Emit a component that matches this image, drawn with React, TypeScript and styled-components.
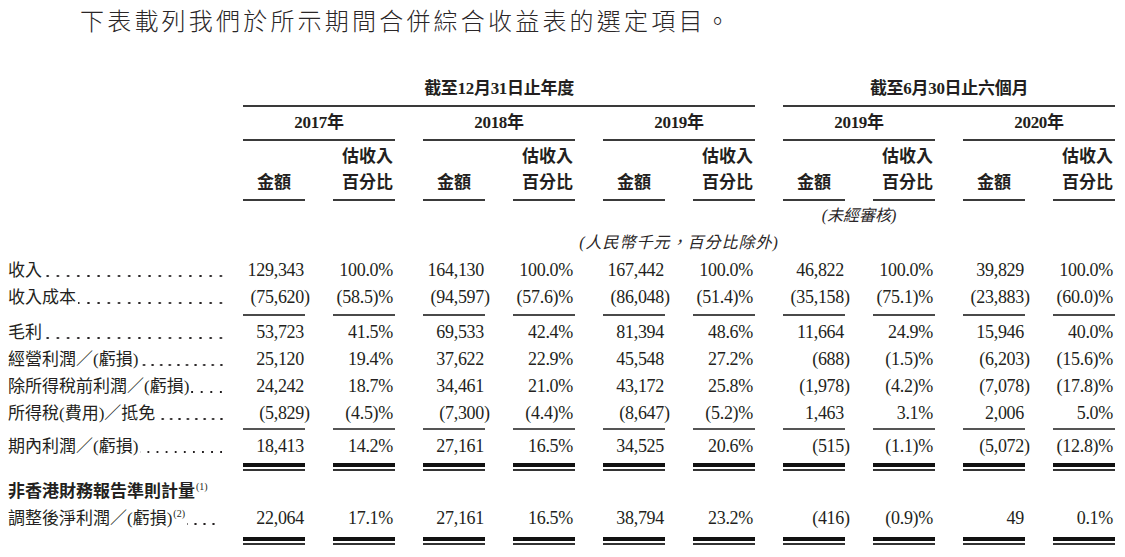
import React from "react";
import styled, { createGlobalStyle } from "styled-components";

const GlobalStyle = createGlobalStyle`
  body {
    margin: 0;
    background: #ffffff;
    color: #231f20;
    font-family: "Liberation Serif", "Noto Sans CJK TC", serif;
  }
`;

type Rule = "single" | "thin" | "double";

const Page = styled.div`
  width: 1125px;
  height: 557px;
  overflow: hidden;
`;

const Title = styled.div`
  padding: 4px 0 0 80px;
  font-family: "Noto Sans CJK TC", sans-serif;
  font-weight: 300;
  font-size: 24px;
  line-height: 32px;
  letter-spacing: 3.2px;
  color: #2a2627;
`;

const Table = styled.div`
  padding-left: 8px;
`;

const Row = styled.div<{ $mt?: number }>`
  display: grid;
  grid-template-columns: 207px repeat(10, 62px);
  column-gap: 28px;
  align-items: start;
  margin-top: ${(p) => p.$mt ?? 0}px;
`;

const GroupHead = styled.div<{ $span: number }>`
  grid-column: span ${(p) => p.$span};
  text-align: center;
  font-weight: 700;
  font-size: 17px;
  line-height: 20px;
  letter-spacing: -0.3px;
  padding-bottom: 6px;
  border-bottom: 2px solid #3a3a3a;
`;

const YearHead = styled.div`
  grid-column: span 2;
  text-align: center;
  font-weight: 700;
  font-size: 17px;
  line-height: 20px;
  letter-spacing: -0.3px;
  padding: 6px 0;
  border-bottom: 2px solid #3a3a3a;
`;

const ColHead = styled.div<{ $align: "center" | "right" }>`
  align-self: stretch;
  display: flex;
  flex-direction: column;
  justify-content: flex-end;
  text-align: ${(p) => p.$align};
  font-weight: 700;
  font-size: 17px;
  line-height: 26px;
  padding: 3px ${(p) => (p.$align === "right" ? "2px" : "0")} 3px 0;
  border-bottom: 2px solid #3a3a3a;
`;

const Note = styled.div<{ $from: number; $span: number; $spacing?: number }>`
  grid-column: ${(p) => p.$from} / span ${(p) => p.$span};
  text-align: center;
  font-style: italic;
  font-size: 16px;
  line-height: 20px;
  letter-spacing: ${(p) => p.$spacing ?? 0}px;
  white-space: nowrap;
  color: #2a2627;
`;

const Label = styled.div<{ $bold?: boolean }>`
  display: flex;
  height: 27px;
  line-height: 27px;
  margin-right: -8px;
  font-size: 17px;
  font-weight: ${(p) => (p.$bold ? 700 : 400)};
  white-space: nowrap;
`;

const LabelText = styled.span`
  flex: none;
`;

const Leader = styled.span<{ $pitch: number; $trim: number }>`
  flex: 1;
  margin: 0 ${(p) => p.$trim}px 0 2px;
  background-image: radial-gradient(circle, #231f20 0.9px, transparent 1.4px);
  background-size: ${(p) => p.$pitch}px 4px;
  background-repeat: repeat-x;
  background-position: right -3px bottom 6px;
`;

const Sup = styled.sup`
  font-family: "Liberation Serif", serif;
  font-weight: 400;
  font-size: 10px;
  line-height: 0;
  vertical-align: 7px;
  margin-left: 1px;
`;

const ruleStyle = (rule?: Rule) => {
  if (rule === "single") return "border-bottom: 2px solid #4a4a4a;";
  if (rule === "thin") return "border-bottom: 2px solid #555555;";
  if (rule === "double")
    return `
      background:
        linear-gradient(#111, #111) left 0 bottom 4px / 100% 4px no-repeat,
        linear-gradient(#333, #333) left 0 bottom 0 / 100% 2px no-repeat;
    `;
  return "";
};

const Num = styled.div<{ $rule?: Rule; $pad: number; $pct: boolean }>`
  text-align: right;
  font-size: 18px;
  line-height: 27px;
  letter-spacing: -0.3px;
  white-space: nowrap;
  padding-right: ${(p) => (p.$pct ? 2 : 1)}px;
  padding-bottom: ${(p) => p.$pad + (p.$rule === "double" ? 8 : 0)}px;
  ${(p) => ruleStyle(p.$rule)}
`;

const Hang = styled.span`
  display: inline-block;
  width: 0;
  overflow: visible;
`;

type DataRow = {
  label: React.ReactNode;
  bold?: boolean;
  pitch?: number;
  trim?: number;
  values?: string[];
  rule?: Rule;
  pad?: number;
  mt?: number;
};

const rows: DataRow[] = [
  {
    label: "收入",
    pitch: 10.2,
    mt: 4,
    values: ["129,343", "100.0%", "164,130", "100.0%", "167,442", "100.0%", "46,822", "100.0%", "39,829", "100.0%"],
  },
  {
    label: "收入成本",
    pitch: 10.2,
    rule: "single",
    pad: 3,
    values: ["(75,620)", "(58.5)%", "(94,597)", "(57.6)%", "(86,048)", "(51.4)%", "(35,158)", "(75.1)%", "(23,883)", "(60.0)%"],
  },
  {
    label: "毛利",
    pitch: 10.2,
    mt: 3,
    values: ["53,723", "41.5%", "69,533", "42.4%", "81,394", "48.6%", "11,664", "24.9%", "15,946", "40.0%"],
  },
  {
    label: "經營利潤／(虧損)",
    pitch: 8.6,
    values: ["25,120", "19.4%", "37,622", "22.9%", "45,548", "27.2%", "(688)", "(1.5)%", "(6,203)", "(15.6)%"],
  },
  {
    label: "除所得稅前利潤／(虧損)",
    pitch: 9.6,
    values: ["24,242", "18.7%", "34,461", "21.0%", "43,172", "25.8%", "(1,978)", "(4.2)%", "(7,078)", "(17.8)%"],
  },
  {
    label: "所得稅(費用)／抵免",
    pitch: 8.4,
    rule: "thin",
    pad: 1,
    values: ["(5,829)", "(4.5)%", "(7,300)", "(4.4)%", "(8,647)", "(5.2)%", "1,463", "3.1%", "2,006", "5.0%"],
  },
  {
    label: "期內利潤／(虧損)",
    pitch: 9.1,
    mt: 3,
    rule: "double",
    pad: 3,
    values: ["18,413", "14.2%", "27,161", "16.5%", "34,525", "20.6%", "(515)", "(1.1)%", "(5,072)", "(12.8)%"],
  },
  {
    label: (
      <>
        非香港財務報告準則計量<Sup>(1)</Sup>
      </>
    ),
    bold: true,
    mt: 7,
  },
  {
    label: (
      <>
        調整後淨利潤／(虧損)<Sup>(2)</Sup>
      </>
    ),
    pitch: 9,
    trim: 8,
    rule: "double",
    pad: 5,
    values: ["22,064", "17.1%", "27,161", "16.5%", "38,794", "23.2%", "(416)", "(0.9)%", "49", "0.1%"],
  },
];

const Amount = ({ value }: { value: string }) => {
  if (value.startsWith("(") && value.endsWith(")")) {
    return (
      <>
        {value.slice(0, -1)}
        <Hang>)</Hang>
      </>
    );
  }
  return <>{value}</>;
};

const App = () => {
  return (
    <Page>
      <GlobalStyle />
      <Title>下表載列我們於所示期間合併綜合收益表的選定項目。</Title>
      <Table>
        <Row $mt={43}>
          <span />
          <GroupHead $span={6}>截至12月31日止年度</GroupHead>
          <GroupHead $span={4}>截至6月30日止六個月</GroupHead>
        </Row>
        <Row>
          <span />
          {["2017年", "2018年", "2019年", "2019年", "2020年"].map((y, i) => (
            <YearHead key={i}>{y}</YearHead>
          ))}
        </Row>
        <Row>
          <span />
          {[0, 1, 2, 3, 4].map((i) => (
            <React.Fragment key={i}>
              <ColHead $align="center">金額</ColHead>
              <ColHead $align="right">
                估收入
                <br />
                百分比
              </ColHead>
            </React.Fragment>
          ))}
        </Row>
        <Row $mt={5}>
          <Note $from={8} $span={2}>(未經審核)</Note>
        </Row>
        <Row $mt={7}>
          <Note $from={2} $span={10} $spacing={1}>
            (人民幣千元，百分比除外)
          </Note>
        </Row>
        {rows.map((r, i) => (
          <Row key={i} $mt={r.mt}>
            <Label $bold={r.bold}>
              <LabelText>{r.label}</LabelText>
              {r.values && <Leader $pitch={r.pitch ?? 10} $trim={r.trim ?? 0} />}
            </Label>
            {r.values?.map((v, j) => (
              <Num key={j} $rule={r.rule} $pad={r.pad ?? 0} $pct={j % 2 === 1}>
                {j % 2 === 0 ? <Amount value={v} /> : v}
              </Num>
            ))}
          </Row>
        ))}
      </Table>
    </Page>
  );
};

export default App;
